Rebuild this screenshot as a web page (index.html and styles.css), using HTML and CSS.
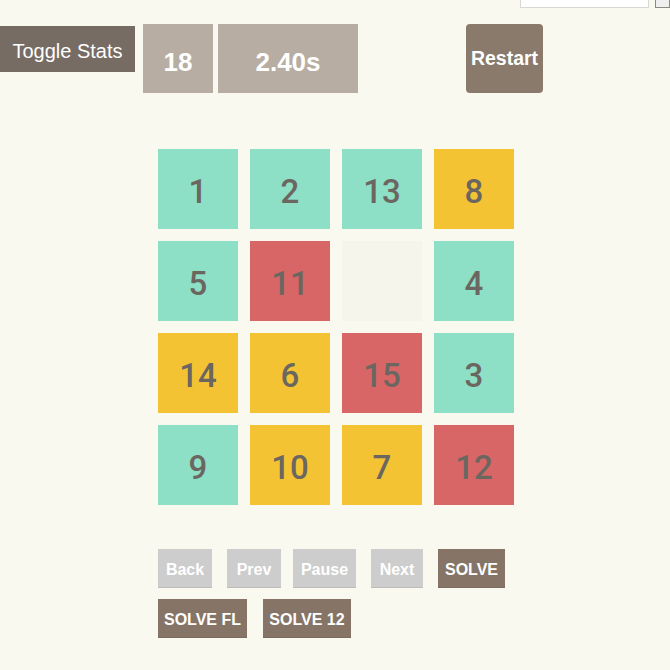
FILE: index.html
```html
<!DOCTYPE html>
<html>
<head>
<meta charset="utf-8">
<link rel="stylesheet" href="styles.css">
</head>
<body>
<div class="topbar">
  <input class="search" type="text">
  <button class="mini"></button>
</div>
<div class="stats-row">
  <button class="toggle">Toggle Stats</button>
  <div class="stat stat-moves">18</div>
  <div class="stat stat-time">2.40s</div>
  <button class="restart">Restart</button>
</div>
<div class="board">
  <div class="tile teal">1</div>
  <div class="tile teal">2</div>
  <div class="tile teal">13</div>
  <div class="tile yellow">8</div>
  <div class="tile teal">5</div>
  <div class="tile red">11</div>
  <div class="tile empty"></div>
  <div class="tile teal">4</div>
  <div class="tile yellow">14</div>
  <div class="tile yellow">6</div>
  <div class="tile red">15</div>
  <div class="tile teal">3</div>
  <div class="tile teal">9</div>
  <div class="tile yellow">10</div>
  <div class="tile yellow">7</div>
  <div class="tile red">12</div>
</div>
<div class="controls">
  <div class="ctrl-row">
    <button class="btn gray btn-back">Back</button>
    <button class="btn gray btn-prev">Prev</button>
    <button class="btn gray btn-pause">Pause</button>
    <button class="btn gray btn-next">Next</button>
    <button class="btn brown btn-solve">SOLVE</button>
  </div>
  <div class="ctrl-row row2">
    <button class="btn brown btn-fl">SOLVE FL</button>
    <button class="btn brown btn-12">SOLVE 12</button>
  </div>
</div>
</body>
</html>
```
FILE: styles.css
```css
html, body {
  margin: 0;
  padding: 0;
  background: #faf9f0;
  font-family: "Liberation Sans", Arial, sans-serif;
}
button {
  font-family: "Liberation Sans", Arial, sans-serif;
  cursor: pointer;
}
.topbar {
  height: 8px;
  overflow: hidden;
  display: flex;
  align-items: flex-end;
  justify-content: flex-end;
  gap: 6px;
}
.search {
  width: 129px;
  height: 20px;
  box-sizing: border-box;
  border: 1px solid #d9d9d4;
  background: #ffffff;
  margin: 0;
  padding: 0;
  flex: none;
}
.mini {
  width: 15px;
  height: 20px;
  box-sizing: border-box;
  border: 1px solid #8a8a85;
  background: #efefef;
  margin: 0;
  padding: 0;
  flex: none;
}
.stats-row {
  display: flex;
  align-items: flex-start;
  margin-top: 16px;
  height: 69px;
}
.toggle {
  margin-top: 2px;
  width: 135px;
  height: 46px;
  background: #766c64;
  color: #ffffff;
  border: none;
  font-size: 20px;
  padding: 5px 0 0 0;
  flex: none;
}
.stat {
  height: 69px;
  background: #b8ada2;
  color: #ffffff;
  font-weight: bold;
  font-size: 26px;
  display: flex;
  align-items: center;
  justify-content: center;
  padding-top: 7px;
  box-sizing: border-box;
  flex: none;
}
.stat-moves {
  width: 70px;
  margin-left: 8px;
}
.stat-time {
  width: 140px;
  margin-left: 5px;
}
.restart {
  margin-left: 108px;
  width: 77px;
  height: 69px;
  background: #8a7a6b;
  color: #ffffff;
  border: none;
  border-radius: 4px;
  font-weight: bold;
  font-size: 19.5px;
  padding: 0;
  flex: none;
}
.board {
  margin-top: 56px;
  margin-left: 158px;
  display: grid;
  grid-template-columns: repeat(4, 80px);
  grid-auto-rows: 80px;
  gap: 12px;
}
.tile {
  display: flex;
  align-items: center;
  justify-content: center;
  font-family: Roboto, "Liberation Sans", Arial, sans-serif;
  font-size: 33px;
  font-weight: 500;
  color: #6b6660;
  padding-top: 4px;
  box-sizing: border-box;
}
.teal { background: #8ddfc6; }
.yellow { background: #f3c333; }
.red { background: #d86666; }
.empty { background: #f6f5ec; }
.controls {
  margin-top: 44px;
  margin-left: 158px;
  display: flex;
  flex-direction: column;
  gap: 11px;
}
.ctrl-row {
  display: flex;
  gap: 15px;
}
.row2 { gap: 16px; }
.btn {
  height: 39px;
  padding: 3px 0 0 0;
  border: none;
  border-bottom: 1px solid rgba(0,0,0,0.08);
  font-weight: bold;
  font-size: 16px;
  color: #ffffff;
  flex: none;
}
.btn-back { width: 54px; }
.btn-prev { width: 54px; }
.btn-pause { width: 63px; margin-left: -3px; }
.btn-next { width: 52px; }
.btn-solve { width: 67px; }
.btn-fl { width: 89px; }
.btn-12 { width: 88px; }
.gray { background: #cdcdcd; }
.brown { background: #867567; }
```
